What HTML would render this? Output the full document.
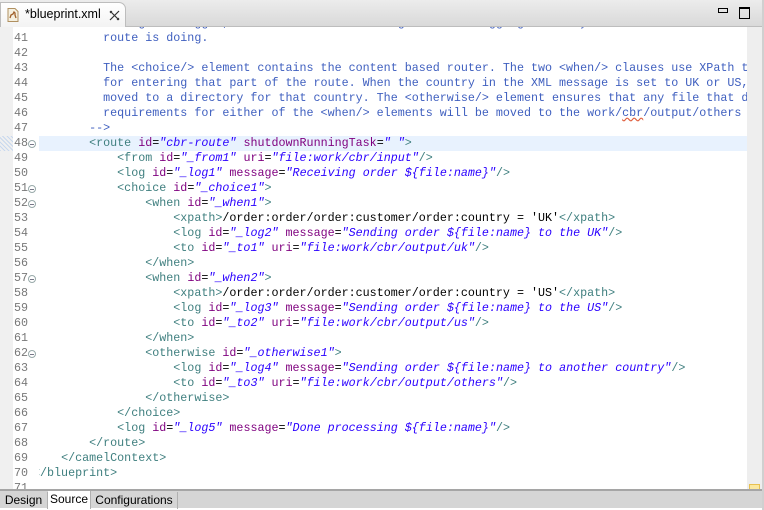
<!DOCTYPE html>
<html><head><meta charset="utf-8"><style>
body{margin:0;width:764px;height:510px;overflow:hidden;background:#fff;font-family:"Liberation Sans",sans-serif;position:relative}
#top{position:absolute;left:0;top:0;width:762px;height:27px;background:linear-gradient(#ececec,#d9d9d9);border-bottom:1px solid #bdbdbd;box-sizing:border-box}
#tab{position:absolute;left:0;top:2px;width:126px;height:25px;background:linear-gradient(#fff,#f3f3f3);border:1px solid #bdbdbd;border-bottom:none;border-radius:0 7px 0 0;box-sizing:border-box;font-size:12.5px;color:#000}
#code{position:absolute;left:0;top:27px;width:747px;height:462px;overflow:hidden;background:#fff}
#gut{position:absolute;left:0;top:0;width:13px;height:462px;background:#f0f0f0}
.ln{position:absolute;left:14px;width:24px;height:15px;font:11.7px/15px "Liberation Mono",monospace;color:#787878}
.t{position:absolute;left:33px;white-space:pre;font:11.7px/15px "Liberation Mono",monospace;color:#000}
.c{color:#3f5fbf}.g{color:#3f7f7f}.a{color:#7f007f}.v{color:#2a00ff;font-style:italic}
.f{position:absolute;left:28px;width:8px;height:8px;border:1px solid #9aa;border-radius:50%;box-sizing:border-box;background:#fff}
.f::after{content:"";position:absolute;left:1px;top:3px;width:4px;height:1px;background:#778}
#hl{position:absolute;left:39px;top:109px;width:708px;height:15px;background:#e8f2fe}
#sb{position:absolute;left:747px;top:27px;width:15px;height:462px;background:#eeeeee}
#bot{position:absolute;left:0;top:489px;width:762px;height:19px;background:#d5d5d5;border-top:2px solid #a5a5a5;box-sizing:border-box;font-size:12px}
#bot span{position:absolute;top:1px;height:17px;line-height:16px}
</style></head><body>
<div id="top">
<div id="tab"><svg style="position:absolute;left:6px;top:5px" width="12" height="14" viewBox="0 0 12 14"><path d="M1 .5h7l3 3v10H1z" fill="#f5f0e0" stroke="#b09060"/><path d="M3 10l1-3 2-1 1-2 1 1v2l1 3" stroke="#a0602a" fill="none" stroke-width="1.3"/></svg><span style="position:absolute;left:24px;top:4px">*blueprint.xml</span><svg style="position:absolute;left:108px;top:7px" width="11" height="11" viewBox="0 0 11 11"><path d="M1 1L10 10M10 1L1 10" stroke="#333" stroke-width="1.2" fill="none"/><path d="M1 3L3 1M8 10l2-2" stroke="#333"/></svg></div>
<div style="position:absolute;left:718px;top:8px;width:8px;height:3px;border:1px solid #000"></div>
<div style="position:absolute;left:739px;top:7px;width:9px;height:9px;border:1px solid #000;border-top-width:2px"></div>
</div>
<div id="code">
<div id="gut"></div>
<div style="position:absolute;left:0;top:109px;width:13px;height:15px;background:repeating-linear-gradient(45deg,#c8d8ee 0 1px,#f0f0f0 1px 3px)"></div>
<div id="hl"></div>
<div style="position:absolute;left:39px;top:0;width:708px;height:462px;overflow:hidden">
<div style="position:absolute;left:-39px;top:0;width:800px">
<div class="t c" style="top:-11px">          message is logged, so we can see in the log what the logging data says about the route</div>
<div class="t c" style="top:4px">          route is doing.</div>
<div class="t c" style="top:34px">          The &lt;choice/&gt; element contains the content based router. The two &lt;when/&gt; clauses use XPath to</div>
<div class="t c" style="top:49px">          for entering that part of the route. When the country in the XML message is set to UK or US, t</div>
<div class="t c" style="top:64px">          moved to a directory for that country. The &lt;otherwise/&gt; element ensures that any file that do</div>
<div class="t c" style="top:79px">          requirements for either of the &lt;when/&gt; elements will be moved to the work/<span style="text-decoration:underline wavy #e06040">cbr</span>/output/others</div>
<div class="t c" style="top:94px">        --&gt;</div>
<div class="t" style="top:109px">        <span class="g">&lt;route</span> <span class="a">id</span>=<span class="v">"cbr-route"</span> <span class="a">shutdownRunningTask</span>=<span class="v">" "</span><span class="g">&gt;</span></div>
<div class="t" style="top:124px">            <span class="g">&lt;from</span> <span class="a">id</span>=<span class="v">"_from1"</span> <span class="a">uri</span>=<span class="v">"file:work/cbr/input"</span><span class="g">/&gt;</span></div>
<div class="t" style="top:139px">            <span class="g">&lt;log</span> <span class="a">id</span>=<span class="v">"_log1"</span> <span class="a">message</span>=<span class="v">"Receiving order ${file:name}"</span><span class="g">/&gt;</span></div>
<div class="t" style="top:154px">            <span class="g">&lt;choice</span> <span class="a">id</span>=<span class="v">"_choice1"</span><span class="g">&gt;</span></div>
<div class="t" style="top:169px">                <span class="g">&lt;when</span> <span class="a">id</span>=<span class="v">"_when1"</span><span class="g">&gt;</span></div>
<div class="t" style="top:184px">                    <span class="g">&lt;xpath&gt;</span>/order:order/order:customer/order:country = 'UK'<span class="g">&lt;/xpath&gt;</span></div>
<div class="t" style="top:199px">                    <span class="g">&lt;log</span> <span class="a">id</span>=<span class="v">"_log2"</span> <span class="a">message</span>=<span class="v">"Sending order ${file:name} to the UK"</span><span class="g">/&gt;</span></div>
<div class="t" style="top:214px">                    <span class="g">&lt;to</span> <span class="a">id</span>=<span class="v">"_to1"</span> <span class="a">uri</span>=<span class="v">"file:work/cbr/output/uk"</span><span class="g">/&gt;</span></div>
<div class="t" style="top:229px">                <span class="g">&lt;/when&gt;</span></div>
<div class="t" style="top:244px">                <span class="g">&lt;when</span> <span class="a">id</span>=<span class="v">"_when2"</span><span class="g">&gt;</span></div>
<div class="t" style="top:259px">                    <span class="g">&lt;xpath&gt;</span>/order:order/order:customer/order:country = 'US'<span class="g">&lt;/xpath&gt;</span></div>
<div class="t" style="top:274px">                    <span class="g">&lt;log</span> <span class="a">id</span>=<span class="v">"_log3"</span> <span class="a">message</span>=<span class="v">"Sending order ${file:name} to the US"</span><span class="g">/&gt;</span></div>
<div class="t" style="top:289px">                    <span class="g">&lt;to</span> <span class="a">id</span>=<span class="v">"_to2"</span> <span class="a">uri</span>=<span class="v">"file:work/cbr/output/us"</span><span class="g">/&gt;</span></div>
<div class="t" style="top:304px">                <span class="g">&lt;/when&gt;</span></div>
<div class="t" style="top:319px">                <span class="g">&lt;otherwise</span> <span class="a">id</span>=<span class="v">"_otherwise1"</span><span class="g">&gt;</span></div>
<div class="t" style="top:334px">                    <span class="g">&lt;log</span> <span class="a">id</span>=<span class="v">"_log4"</span> <span class="a">message</span>=<span class="v">"Sending order ${file:name} to another country"</span><span class="g">/&gt;</span></div>
<div class="t" style="top:349px">                    <span class="g">&lt;to</span> <span class="a">id</span>=<span class="v">"_to3"</span> <span class="a">uri</span>=<span class="v">"file:work/cbr/output/others"</span><span class="g">/&gt;</span></div>
<div class="t" style="top:364px">                <span class="g">&lt;/otherwise&gt;</span></div>
<div class="t" style="top:379px">            <span class="g">&lt;/choice&gt;</span></div>
<div class="t" style="top:394px">            <span class="g">&lt;log</span> <span class="a">id</span>=<span class="v">"_log5"</span> <span class="a">message</span>=<span class="v">"Done processing ${file:name}"</span><span class="g">/&gt;</span></div>
<div class="t" style="top:409px">        <span class="g">&lt;/route&gt;</span></div>
<div class="t" style="top:424px">    <span class="g">&lt;/camelContext&gt;</span></div>
<div class="t" style="top:439px"><span class="g">&lt;/blueprint&gt;</span></div>
</div></div>
<div class="ln" style="top:4px">41</div><div class="ln" style="top:19px">42</div><div class="ln" style="top:34px">43</div><div class="ln" style="top:49px">44</div><div class="ln" style="top:64px">45</div><div class="ln" style="top:79px">46</div><div class="ln" style="top:94px">47</div><div class="ln" style="top:109px">48</div><div class="ln" style="top:124px">49</div><div class="ln" style="top:139px">50</div><div class="ln" style="top:154px">51</div><div class="ln" style="top:169px">52</div><div class="ln" style="top:184px">53</div><div class="ln" style="top:199px">54</div><div class="ln" style="top:214px">55</div><div class="ln" style="top:229px">56</div><div class="ln" style="top:244px">57</div><div class="ln" style="top:259px">58</div><div class="ln" style="top:274px">59</div><div class="ln" style="top:289px">60</div><div class="ln" style="top:304px">61</div><div class="ln" style="top:319px">62</div><div class="ln" style="top:334px">63</div><div class="ln" style="top:349px">64</div><div class="ln" style="top:364px">65</div><div class="ln" style="top:379px">66</div><div class="ln" style="top:394px">67</div><div class="ln" style="top:409px">68</div><div class="ln" style="top:424px">69</div><div class="ln" style="top:439px">70</div><div class="ln" style="top:454px">71</div>
<div class="f" style="top:113px"></div><div class="f" style="top:158px"></div><div class="f" style="top:173px"></div><div class="f" style="top:248px"></div><div class="f" style="top:323px"></div>
</div>
<div id="sb"></div>
<div style="position:absolute;left:749px;top:484px;width:9px;height:4px;background:#fbe8a0;border:1px solid #e8c050"></div>
<div style="position:absolute;left:762px;top:0;width:2px;height:510px;background:#d0d0d0"></div>
<div id="bot">
<span style="left:0;width:47px;text-align:center;border-right:1px solid #b0b0b0">Design</span>
<span style="left:48px;width:42px;text-align:center;background:#fff;border-right:1px solid #b0b0b0;top:0;height:18px">Source</span>
<span style="left:91px;width:86px;text-align:center;border-right:1px solid #b0b0b0">Configurations</span>
</div>
</body></html>
